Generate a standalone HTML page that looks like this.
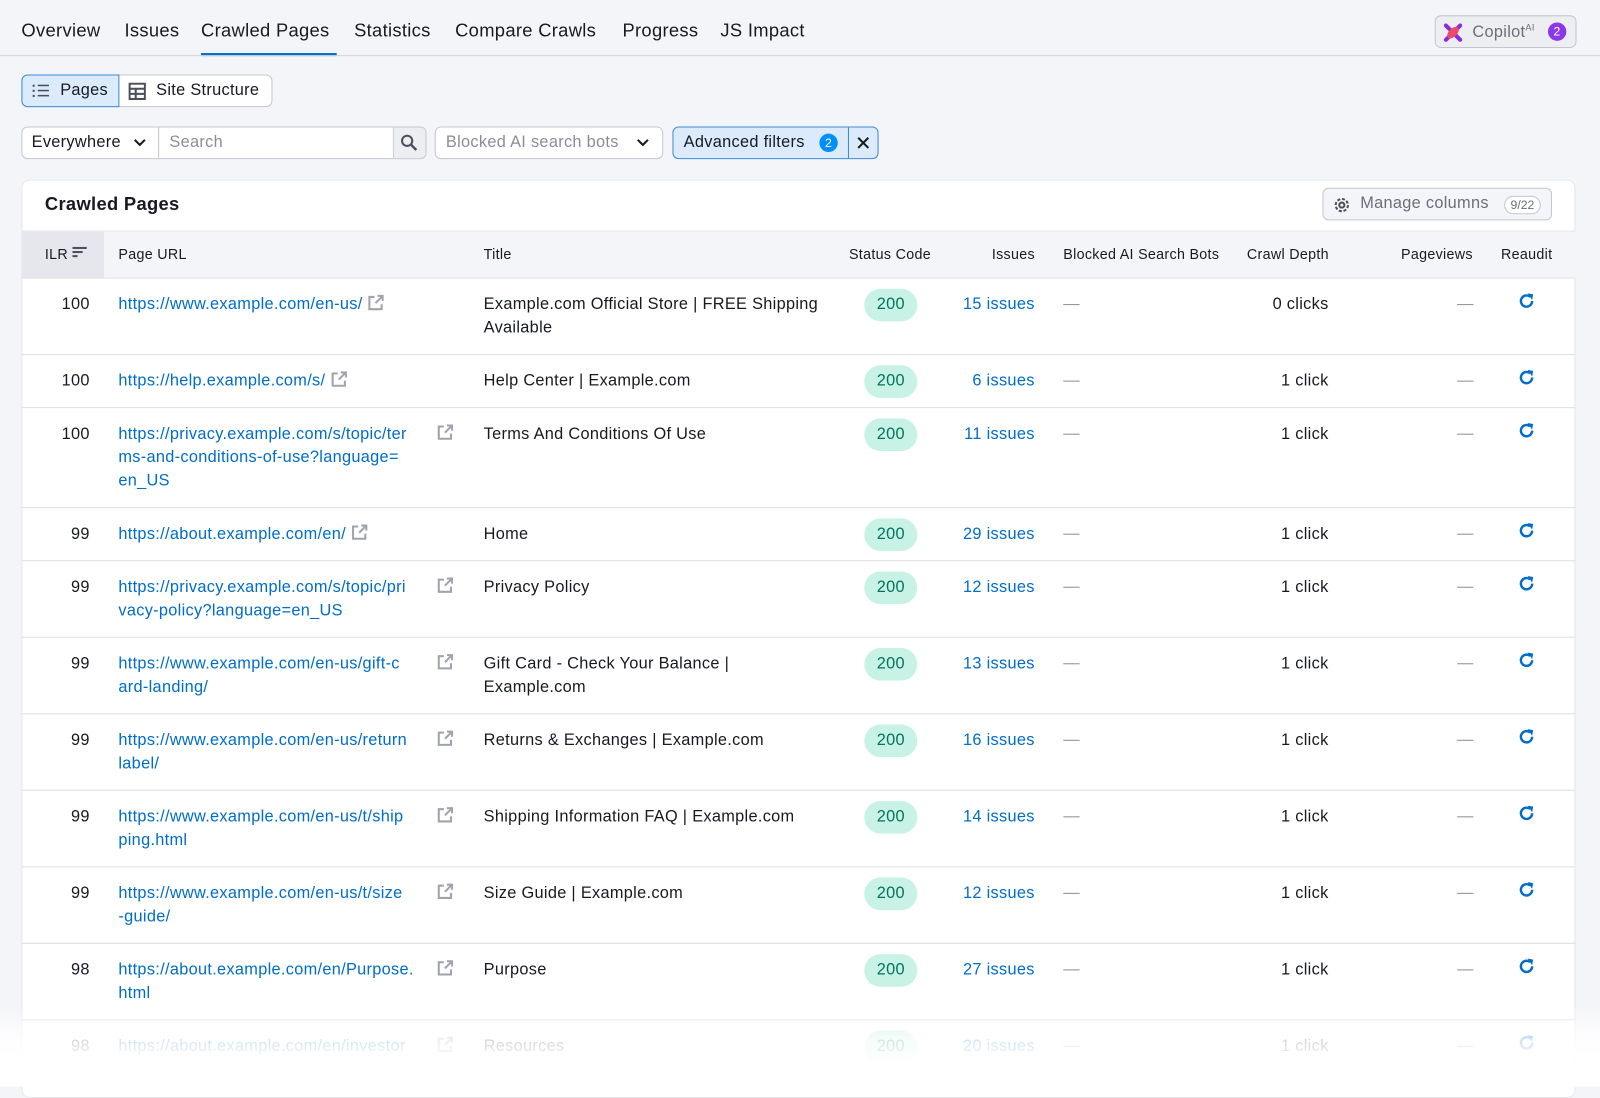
<!DOCTYPE html>
<html><head><meta charset="utf-8"><style>
*{box-sizing:border-box;margin:0;padding:0}
body{width:1600px;height:1065px;overflow:hidden;background:#f4f5f9;font-family:"Liberation Sans",sans-serif;color:#171a22;position:relative;letter-spacing:0.3px}
#w{position:absolute;left:0;top:0;width:1568px;height:1044px;transform:scale(1.0204);transform-origin:0 0}
.a{position:absolute;white-space:nowrap}
.nav{font-size:18px;top:20px}
.btn{position:absolute;border:1px solid #c4c7cf;background:#fff;border-radius:6px;font-size:16px}
.card{position:absolute;left:21px;top:176px;width:1523px;height:900px;background:#fff;border-radius:8px;border:1px solid #e6e7ec}
.row{position:absolute;left:21px;width:1523px;border-top:1px solid #dedfe5;font-size:16px;line-height:23px}
.row .a{top:14px}
.lnk{color:#006dca}
.pill{position:absolute;left:847px;top:10px;width:52px;height:32px;border-radius:16px;background:#c9f2e6;color:#00745d;text-align:center;line-height:32px;font-size:16px}
.dash{display:inline-block;width:16px;height:1px;background:#8b8e98;vertical-align:middle}
.th{font-size:14px;top:241px;color:#171a22}
</style></head><body><div id="w">
<div class="a nav" style="left:21px">Overview</div>
<div class="a nav" style="left:122px">Issues</div>
<div class="a nav" style="left:197px">Crawled Pages</div>
<div class="a nav" style="left:347px">Statistics</div>
<div class="a nav" style="left:446px">Compare Crawls</div>
<div class="a nav" style="left:610px">Progress</div>
<div class="a nav" style="left:706px">JS Impact</div>
<div style="position:absolute;left:197px;top:52px;width:133px;height:3px;background:#006dca"></div>
<div style="position:absolute;left:0;top:54px;width:1600px;height:1px;background:#d3d5dc"></div>
<div class="btn" style="left:1406px;top:15px;width:139px;height:32px;background:#eceef2;color:#6c6e79;font-size:16px">
<svg style="position:absolute;left:8px;top:7px" width="18" height="18" viewBox="0 0 18 18"><path d="M2 2 L16 16 M16 2 L2 16" stroke="#8a2be2" stroke-width="4" stroke-linecap="round"/><ellipse cx="9" cy="9" rx="7" ry="4" transform="rotate(-45 9 9)" fill="#ec4a6a"/></svg>
<span class="a" style="left:36px;top:6px">Copilot<sup style="font-size:9px">AI</sup></span>
<span class="a" style="left:110px;top:6px;width:18px;height:18px;border-radius:9px;background:#8b39e8;color:#fff;font-size:12px;text-align:center;line-height:18px">2</span></div>

<div class="btn" style="left:21px;top:73px;width:246px;height:32px"></div>
<div style="position:absolute;left:21px;top:73px;width:96px;height:32px;background:#dcebfc;border:1px solid #3c8bd6;border-radius:6px 0 0 6px"></div>
<svg class="a" style="left:31px;top:81px" width="18" height="16"><g fill="#4c4f5a"><rect x="1" y="2" width="2" height="2"/><rect x="1" y="7" width="2" height="2"/><rect x="1" y="12" width="2" height="2"/><rect x="6" y="2" width="11" height="1.5"/><rect x="6" y="7" width="11" height="1.5"/><rect x="6" y="12" width="11" height="1.5"/></g></svg>
<div class="a" style="left:59px;top:80px;font-size:16px">Pages</div>
<svg class="a" style="left:126px;top:81px" width="17" height="17"><rect x="1" y="1" width="15" height="15" fill="none" stroke="#4c4f5a" stroke-width="2"/><path d="M1 6H16M1 11H16M7 6V16" stroke="#4c4f5a" stroke-width="2"/></svg>
<div class="a" style="left:153px;top:80px;font-size:16px">Site Structure</div>

<div class="btn" style="left:21px;top:124px;width:397px;height:32px"></div>
<div class="a" style="left:31px;top:131px;font-size:16px">Everywhere</div>
<svg class="a" style="left:131px;top:136px" width="12" height="8"><path d="M1 1L6 6L11 1" fill="none" stroke="#171a22" stroke-width="2"/></svg>
<div style="position:absolute;left:155px;top:125px;width:1px;height:30px;background:#c4c7cf"></div>
<div class="a" style="left:166px;top:131px;font-size:16px;color:#8b8e98">Search</div>
<div style="position:absolute;left:385px;top:125px;width:32px;height:30px;background:#eceef2;border-left:1px solid #c4c7cf;border-radius:0 6px 6px 0"></div>
<svg class="a" style="left:392px;top:131px" width="18" height="18"><circle cx="7" cy="7" r="5" fill="none" stroke="#4c4f5a" stroke-width="2"/><path d="M11 11L16 16" stroke="#4c4f5a" stroke-width="2.4"/></svg>
<div class="btn" style="left:426px;top:124px;width:224px;height:32px"></div>
<div class="a" style="left:437px;top:131px;font-size:16px;color:#8b8e98">Blocked AI search bots</div>
<svg class="a" style="left:624px;top:136px" width="12" height="8"><path d="M1 1L6 6L11 1" fill="none" stroke="#171a22" stroke-width="2"/></svg>
<div style="position:absolute;left:659px;top:124px;width:202px;height:32px;background:#dcebfc;border:1px solid #3c8bd6;border-radius:6px"></div>
<div style="position:absolute;left:831px;top:125px;width:1px;height:30px;background:#3c8bd6"></div>
<div class="a" style="left:670px;top:131px;font-size:16px">Advanced filters</div>
<div class="a" style="left:803px;top:131px;width:18px;height:18px;border-radius:9px;background:#008ff8;color:#fff;font-size:12px;text-align:center;line-height:18px">2</div>
<svg class="a" style="left:840px;top:134px" width="12" height="12"><path d="M1 1L11 11M11 1L1 11" stroke="#171a22" stroke-width="2"/></svg>

<div class="card"></div>
<div class="a" style="left:44px;top:190px;font-size:18px;font-weight:bold">Crawled Pages</div>
<div class="btn" style="left:1296px;top:184px;width:225px;height:32px;background:#f4f5f9;color:#6c6e79">
<svg class="a" style="left:8px;top:6px" width="20" height="20" viewBox="0 0 20 20"><circle cx="10" cy="10" r="6" fill="none" stroke="#4c4f5a" stroke-width="2" stroke-dasharray="3 1.7"/><circle cx="10" cy="10" r="2.5" fill="none" stroke="#4c4f5a" stroke-width="2"/></svg>
<span class="a" style="left:36px;top:6px;font-size:16px">Manage columns</span>
<span class="a" style="left:177px;top:7px;width:36px;height:18px;border:1px solid #c4c7cf;border-radius:9px;background:#fff;font-size:12px;text-align:center;line-height:16px;letter-spacing:0">9/22</span></div>

<div style="position:absolute;left:21px;top:226px;width:1523px;height:46px;background:#f4f5f9;border-top:1px solid #e6e7ec"></div>
<div style="position:absolute;left:21px;top:226px;width:81px;height:46px;background:#e6e7ec"></div>
<div class="a th" style="left:44px">ILR</div>
<svg class="a" style="left:71px;top:241px" width="15" height="13"><rect x="0" y="1" width="14" height="2" fill="#4c4f5a"/><rect x="0" y="5" width="10" height="2" fill="#4c4f5a"/><rect x="0" y="9" width="5" height="2" fill="#4c4f5a"/></svg>
<div class="a th" style="left:116px">Page URL</div>
<div class="a th" style="left:474px">Title</div>
<div class="a th" style="left:832px">Status Code</div>
<div class="a th" style="left:972px">Issues</div>
<div class="a th" style="left:1042px">Blocked AI Search Bots</div>
<div class="a th" style="left:1222px">Crawl Depth</div>
<div class="a th" style="left:1373px">Pageviews</div>
<div class="a th" style="left:1471px">Reaudit</div>

<div id="rows"></div>
<div style="position:absolute;left:0;top:985px;width:1600px;height:80px;background:linear-gradient(rgba(255,255,255,0),rgba(255,255,255,0.8) 40%,#fff 75%)"></div>
</div>
<script>
var ext='<svg width="17" height="17" viewBox="0 0 17 17" style="vertical-align:-2px"><path d="M7 3H2V15H14V10" fill="none" stroke="#a0a3ad" stroke-width="2"/><path d="M8 9L15 2M10 2H15V7" fill="none" stroke="#a0a3ad" stroke-width="2"/></svg>';
var re='<svg width="18" height="18" viewBox="0 0 18 18"><path d="M14.5 9A5.5 5.5 0 1 1 12.5 4.8" fill="none" stroke="#006dca" stroke-width="2.4"/><path d="M10 1.5L15.5 2.5L14.5 8Z" fill="#006dca"/></svg>';
var R=[[272,75,'100',['https://www.example.com/en-us/'],'Example.com Official Store | FREE Shipping<br>Available','15 issues','0 clicks'],
[347,52,'100',['https://help.example.com/s/'],'Help Center | Example.com','6 issues','1 click'],
[399,98,'100',['https://privacy.example.com/s/topic/ter','ms-and-conditions-of-use?language=','en_US'],'Terms And Conditions Of Use','11 issues','1 click'],
[497,52,'99',['https://about.example.com/en/'],'Home','29 issues','1 click'],
[549,75,'99',['https://privacy.example.com/s/topic/pri','vacy-policy?language=en_US'],'Privacy Policy','12 issues','1 click'],
[624,75,'99',['https://www.example.com/en-us/gift-c','ard-landing/'],'Gift Card - Check Your Balance |<br>Example.com','13 issues','1 click'],
[699,75,'99',['https://www.example.com/en-us/return','label/'],'Returns &amp; Exchanges | Example.com','16 issues','1 click'],
[774,75,'99',['https://www.example.com/en-us/t/ship','ping.html'],'Shipping Information FAQ | Example.com','14 issues','1 click'],
[849,75,'99',['https://www.example.com/en-us/t/size','-guide/'],'Size Guide | Example.com','12 issues','1 click'],
[924,75,'98',['https://about.example.com/en/Purpose.','html'],'Purpose','27 issues','1 click'],
[999,75,'98',['https://about.example.com/en/investor'],'Resources','20 issues','1 click']];
var h='';
R.forEach(function(r,i){
 var single=r[3].length==1&&i<10;
 var u=single?r[3][0]+' '+ext:r[3].join('<br>');
 var ex=single?'':'<div class="a" style="left:407px">'+ext+'</div>';
 h+='<div class="row" style="top:'+r[0]+'px;height:'+r[1]+'px">'+
 '<div class="a" style="right:1456px">'+r[2]+'</div>'+
 '<div class="a lnk" style="left:95px">'+u+'</div>'+ex+
 '<div class="a" style="left:453px">'+r[4]+'</div>'+
 '<div class="pill" style="left:826px">200</div>'+
 '<div class="a lnk" style="right:530px">'+r[5]+'</div>'+
 '<div class="a" style="left:1021px"><span class="dash"></span></div>'+
 '<div class="a" style="right:242px">'+r[6]+'</div>'+
 '<div class="a" style="right:100px"><span class="dash"></span></div>'+
 '<div class="a" style="left:1466px;top:13px">'+re+'</div></div>';
});
document.getElementById('rows').innerHTML=h;
</script>
</body></html>
